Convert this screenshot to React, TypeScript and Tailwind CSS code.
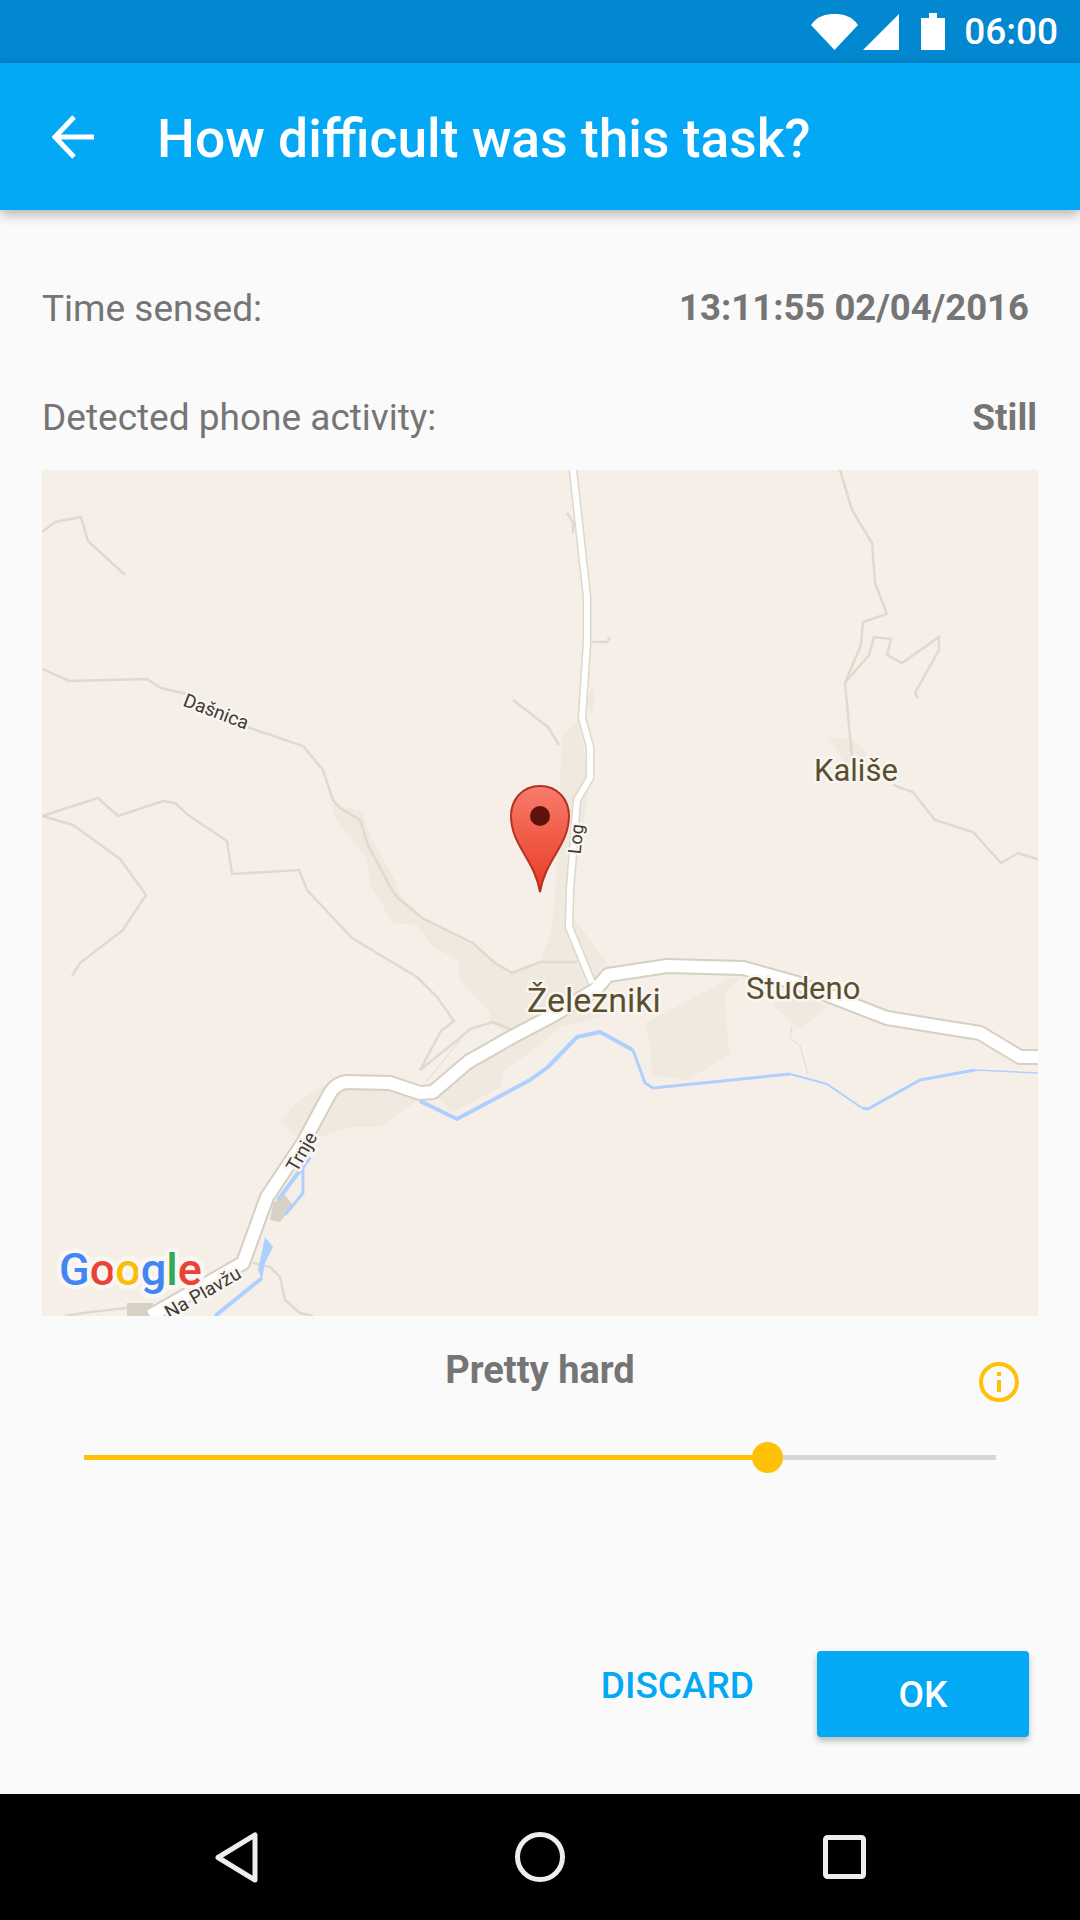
const roboto = "font-['Roboto',sans-serif]";

function MapArt() {
  const line = "fill-none stroke-[#dfd9cf] stroke-[2.5px]";
  const halo = { paintOrder: "stroke" as const, stroke: "#f9f5f1", strokeWidth: 5, strokeLinejoin: "round" as const };
  const place = "fill-[#5b4e2e] font-['Roboto',sans-serif]";
  const small = "fill-[#3f3a33] font-['Roboto',sans-serif]";
  const main = "M150 1316L243 1263L267 1197L303 1143L330 1093Q336 1083 347 1082L390 1083L420 1093L433 1092L468 1062L510 1038L550 1017L595 990L608 975L667 966L743 968L797 983L887 1018L980 1033L1020 1057L1040 1057";
  const log = "M573 470L587 597L587 643L582 718L590 747L590 778L577 800L570 890L569 927L592 983";
  return (
    <svg viewBox="42 470 996 846" className="block w-full h-full">
      <defs>
        <linearGradient id="pin" x1="0" y1="0" x2="0" y2="1">
          <stop offset="0" stopColor="#f87c6c" />
          <stop offset="1" stopColor="#e93a22" />
        </linearGradient>
      </defs>
      <rect x="42" y="470" width="996" height="846" fill="#f6efe8" />
      <g fill="#efe9e0">
        <path d="M333 803L362 812L372 840L395 880L400 895L424 918L473 943L495 963L512 973L540 962L552 930L556 880L562 737L578 720L590 780L575 880L573 917L610 967L597 990L520 1040L490 1023L490 1013L460 980L458 960L433 947L417 925L393 923L370 885L367 860L333 815Z" />
        <path d="M280 1122L297 1137L317 1138L350 1127L380 1127L403 1110L420 1100L433 1098L390 1080L345 1078L337 1077L297 1102Z" />
        <path d="M452 1113L500 1087L505 1070L547 1040L560 1027L580 1023L610 1013L570 1000L468 1062L433 1092Z" />
        <path d="M645 1023L727 980L740 977L725 993L728 1047L732 1053L687 1080L652 1075L650 1047Z" />
        <path d="M773 1005L797 1027L803 1027L827 1007L800 990Z" />
        <path d="M828 737L853 740L867 753L857 770L843 760Z" />
        <path d="M592 685L596 697L591 717L588 700Z" />
      </g>
      <g className={line}>
        <path d="M42 532L55 522L81 517L88 541L125 575" />
        <path d="M42 669L69 681L147 679L161 688L187 694L247 727L303 746L323 770L333 800L340 808L360 820L368 845L392 890L398 898L422 918L473 943L495 963L512 973L540 962L577 962" />
        <path d="M42 816L98 798L118 816L163 801L175 803L188 815L227 841L232 874L299 870L307 890L352 938L417 977L437 997L454 1021L441 1031L420 1070L460 1038L470 1029L493 1022L512 1030" />
        <path d="M42 816L73 825L120 859L146 895L123 930L80 963L72 976" />
        <path d="M513 700L548 727L559 745" />
        <path d="M840 470L852 510L872 543L875 583L887 614L863 622L861 645L845 683L852 757" />
        <path d="M845 683L869 655L874 637L891 639L887 655L902 663L939 637L939 650L915 693L918 698" />
        <path d="M893 785L913 792L935 820L973 832L1001 863L1018 853L1040 860" />
        <path d="M592 642L607 642L610 637" />
        <path d="M567 513L573 522L573 533" />
        <path d="M253 1263L270 1267L280 1277L285 1300L300 1313L313 1316" />
        <path d="M792 1027L790 1038L800 1046L808 1074" strokeWidth="1" />
        <path d="M427 1081L460 1040" strokeWidth="1" />
        <path d="M65 1316L90 1312L127 1308L155 1310" />
      </g>
      <path d="M270 1220L273 1203L285 1195L293 1205L280 1222Z" fill="#d8d1c6" />
      <rect x="127" y="1303" width="26" height="13" fill="#d8d1c6" />
      <g fill="none" stroke="#aed0ff" strokeLinejoin="round">
        <path d="M420 1101L457 1119L530 1080L548 1067L577 1037L600 1032L633 1050" strokeWidth="4" />
        <path d="M633 1050L645 1083L653 1088L790 1074" strokeWidth="3" />
        <path d="M790 1074L827 1084L862 1108" strokeWidth="2" />
        <path d="M862 1108L868 1109L920 1080L975 1070" strokeWidth="3" />
        <path d="M975 1070L1038 1073" strokeWidth="1.500" />
        <path d="M310 1157L278 1200" strokeWidth="4" />
        <path d="M303 1170L303 1193L285 1215" strokeWidth="3" />
        <path d="M262 1278L215 1316" strokeWidth="4" />
      </g>
      <path d="M265 1237L273 1247L265 1263L262 1280L258 1270Z" fill="#aed0ff" />
      <path d="M310 1157L303 1172L296 1176Z" fill="#aed0ff" />
      <g className="fill-none" strokeLinejoin="round">
        <path d={log} stroke="#ddd7cc" strokeWidth="9" />
        <path d={main} stroke="#d5cfc4" strokeWidth="16" />
        <path d={log} stroke="#ffffff" strokeWidth="6" />
        <path d={main} stroke="#ffffff" strokeWidth="12" />
      </g>
      <text x="216" y="718" fontSize="19" textAnchor="middle" transform="rotate(21 216 712)" className={small} style={halo}>Dašnica</text>
      <text x="576" y="845" fontSize="18" textAnchor="middle" transform="rotate(-84 576 839)" className={small} style={halo}>Log</text>
      <text x="302" y="1158" fontSize="19" textAnchor="middle" transform="rotate(-60 302 1152)" className={small} style={halo}>Trnje</text>
      <text x="203" y="1299" fontSize="19" textAnchor="middle" transform="rotate(-30 203 1293)" className={small} style={halo}>Na Plavžu</text>
      <text x="814" y="781" fontSize="31" className={place} style={halo}>Kališe</text>
      <text x="527" y="1012" fontSize="34" className={place} style={halo}>Železniki</text>
      <text x="746" y="999" fontSize="31" className={place} style={halo}>Studeno</text>
      <text x="59" y="1285" fontSize="45" fontWeight="500" className="font-['Roboto',sans-serif]" style={{ paintOrder: "stroke", stroke: "#f9f6f3", strokeWidth: 9, strokeLinejoin: "round" }}>
        <tspan fill="#4285f4">G</tspan>
        <tspan fill="#ea4335">o</tspan>
        <tspan fill="#fbbc05">o</tspan>
        <tspan fill="#4285f4">g</tspan>
        <tspan fill="#34a853">l</tspan>
        <tspan fill="#ea4335">e</tspan>
      </text>
      <path d="M540 786C522 786 511 800 511 816C511 845 535 860 540 892C545 860 569 845 569 816C569 800 558 786 540 786Z" fill="url(#pin)" stroke="#b33225" strokeWidth="2" />
      <circle cx="540" cy="816" r="10" fill="#5f110c" />
    </svg>
  );
}

export default function App() {
  return (
    <div className={`flex flex-col w-[1080px] h-[1920px] overflow-hidden bg-[#fafafa] ${roboto}`}>
      <div className="flex justify-end items-center h-[63px] bg-[#0288d1] pr-[22px] text-white">
        <svg width="136" height="40" viewBox="813 11 136 40" className="mr-[17px]" fill="#fff">
          <path d="M813 24C819 15 828 13 836.500 13C845 13 854 15 860 24L836.500 49Z" />
          <path d="M865 49L901 13V49Z" />
          <path d="M923 17H931V12H939V17H947V49H923Z" />
        </svg>
        <span className="text-[37px] font-medium leading-none">06:00</span>
      </div>
      <div className="relative z-10 flex items-center h-[147px] bg-[#03a9f5] shadow-[0_4px_12px_rgba(0,0,0,0.3)] text-white">
        <svg width="44" height="44" viewBox="0 0 44 44" className="ml-[52px]" fill="none" stroke="#fff" strokeWidth="5">
          <path d="M42 22H4M22 2L3 22L22 42" />
        </svg>
        <span className="ml-[61px] text-[53.400px] font-medium leading-none mt-[5px]">How difficult was this task?</span>
      </div>
      <div className="flex justify-between items-center h-[108px] mt-[44px] pl-[42px] pr-[51px] text-[37px] leading-none text-[#757575]">
        <span>Time sensed:</span>
        <span className="font-bold text-[36.500px]">13:11:55 02/04/2016</span>
      </div>
      <div className="flex justify-between items-center h-[110px] pl-[42px] pr-[43px] text-[37px] leading-none text-[#757575]">
        <span>Detected phone activity:</span>
        <span className="font-bold">Still</span>
      </div>
      <div className="ml-[42px] w-[996px] h-[846px] mt-[-2px]">
        <MapArt />
      </div>
      <div className="relative h-[105px] pt-[35px] text-center text-[38px] leading-none font-bold text-[#757575]">
        Pretty hard
        <svg width="42" height="42" viewBox="0 0 42 42" className="absolute left-[978px] top-[45px]" fill="none" stroke="#ffc107" strokeWidth="4">
          <circle cx="21" cy="21" r="18" />
          <path d="M21 19V31M21 11V15" />
        </svg>
      </div>
      <div className="relative ml-[84px] w-[912px] h-[5px] mt-[34px] bg-[#d6d6d6]">
        <div className="h-full w-[684px] bg-[#ffc107]" />
        <div className="absolute left-[668px] top-[-13px] w-[31px] h-[31px] rounded-full bg-[#ffc107]" />
      </div>
      <div className="flex justify-end items-start mt-[191px] pr-[51px]">
        <span className="mt-[16px] mr-[63px] text-[37px] leading-none font-medium text-[#03a9f4]">DISCARD</span>
        <div className="flex items-center justify-center w-[212px] h-[86px] pt-[2px] rounded-[4px] bg-[#03a9f5] text-white text-[37px] font-medium shadow-[0_4px_6px_rgba(0,0,0,0.25)]">OK</div>
      </div>
      <div className="flex-1" />
      <div className="flex items-center justify-center h-[126px] bg-black">
        <svg width="1080" height="126" viewBox="0 1794 1080 126" fill="none" stroke="#eeeeee" strokeWidth="5" strokeLinejoin="round">
          <path d="M255 1835V1880L218 1857.500Z" />
          <circle cx="540" cy="1857" r="22.500" />
          <rect x="825.500" y="1837.500" width="38" height="39" rx="2" />
        </svg>
      </div>
    </div>
  );
}
